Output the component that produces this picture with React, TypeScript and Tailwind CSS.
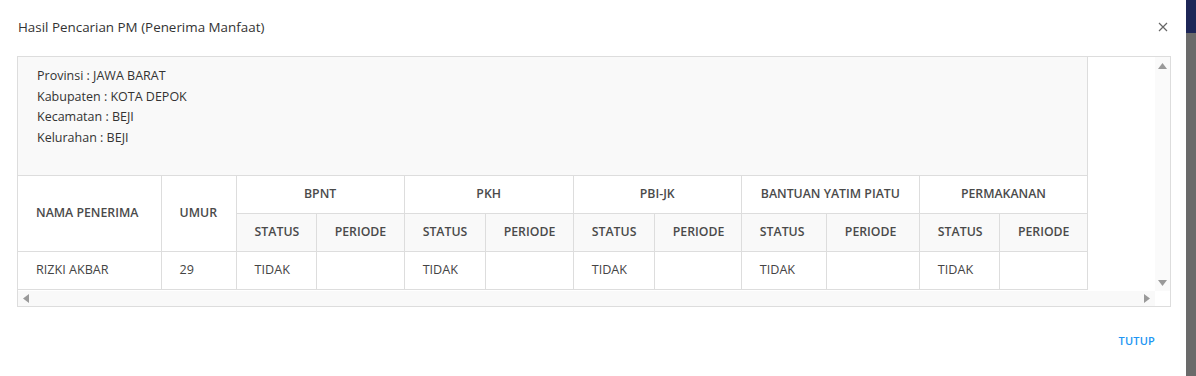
const programs = ['BPNT', 'PKH', 'PBI-JK', 'BANTUAN YATIM PIATU', 'PERMAKANAN'];

const colWidths = [143, 75, 80, 88, 81, 88, 81, 87, 85, 93, 80, 88];

const wilayah = [
  ['Provinsi', 'JAWA BARAT'],
  ['Kabupaten', 'KOTA DEPOK'],
  ['Kecamatan', 'BEJI'],
  ['Kelurahan', 'BEJI'],
];

const cell = 'border border-[#dddddd] h-[38px] px-[18px] align-middle whitespace-nowrap';
const head = `${cell} font-semibold text-[12.3px] text-[#4a4a4a]`;

function Arrow({ dir }: { dir: 'up' | 'down' | 'left' | 'right' }) {
  const points = {
    up: '0,6 4.5,0 9,6',
    down: '0,0 4.5,6 9,0',
    left: '6,0 0,4.5 6,9',
    right: '0,0 6,4.5 0,9',
  }[dir];
  const vertical = dir === 'up' || dir === 'down';
  return (
    <svg width={vertical ? 9 : 6} height={vertical ? 6 : 9} viewBox={vertical ? '0 0 9 6' : '0 0 6 9'}>
      <polygon points={points} fill="#9a9a9a" />
    </svg>
  );
}

export default function App() {
  return (
    <div className="flex h-[376px] w-[1196px] bg-white text-[#333333]" style={{ fontFamily: '"Open Sans", "Noto Sans", sans-serif' }}>
      <div className="flex w-[1186px] flex-col">
        {/* header */}
        <div className="flex h-[56px] items-center justify-between pl-[18px] pr-[18px]">
          <h2 className="text-[13.4px] leading-none text-[#333333]">Hasil Pencarian PM (Penerima Manfaat)</h2>
          <svg width="10" height="10" viewBox="0 0 10 10" className="mt-[-3px]">
            <path d="M1 1 L9 9 M9 1 L1 9" stroke="#666666" strokeWidth="1.2" />
          </svg>
        </div>

        {/* scroll box */}
        <div className="ml-[17px] flex h-[251px] w-[1154px] flex-col border border-[#dddddd]">
          <div className="flex min-h-0 flex-1">
            <div className="flex-1 overflow-hidden">
              <div className="w-[1070px]">
                <div className="h-[118px] border-r border-[#dddddd] bg-[#f9f9f9] pl-[19px] pt-[9px] text-[12.5px] leading-[20.5px]">
                  {wilayah.map(([k, v]) => (
                    <div key={k}>
                      {k} : {v}
                    </div>
                  ))}
                </div>
                <table className="table-fixed border-collapse text-left text-[12.6px] text-[#444444]" style={{ width: 1070 }}>
                  <colgroup>
                    {colWidths.map((w, i) => (
                      <col key={i} style={{ width: w }} />
                    ))}
                  </colgroup>
                  <thead>
                    <tr>
                      <th rowSpan={2} className={`${head} border-l-0`}>NAMA PENERIMA</th>
                      <th rowSpan={2} className={head}>UMUR</th>
                      {programs.map((p) => (
                        <th key={p} colSpan={2} className={`${head} text-center`}>{p}</th>
                      ))}
                    </tr>
                    <tr className="bg-[#f9f9f9]">
                      {programs.map((p) => [
                        <th key={`${p}-s`} className={head}>STATUS</th>,
                        <th key={`${p}-p`} className={head}>PERIODE</th>,
                      ])}
                    </tr>
                  </thead>
                  <tbody>
                    <tr>
                      <td className={`${cell} border-l-0`}>RIZKI AKBAR</td>
                      <td className={cell}>29</td>
                      {programs.map((p) => [
                        <td key={`${p}-s`} className={cell}>TIDAK</td>,
                        <td key={`${p}-p`} className={cell}></td>,
                      ])}
                    </tr>
                  </tbody>
                </table>
              </div>
            </div>
            {/* vertical scrollbar */}
            <div className="flex w-[15px] flex-col items-center justify-between bg-[#fafafa] pb-[5px] pt-[6px]">
              <Arrow dir="up" />
              <Arrow dir="down" />
            </div>
          </div>
          {/* horizontal scrollbar */}
          <div className="flex h-[15px]">
            <div className="flex flex-1 items-center justify-between bg-[#f9f9f9] pl-[5px] pr-[5px]">
              <Arrow dir="left" />
              <Arrow dir="right" />
            </div>
            <div className="w-[15px] bg-white" />
          </div>
        </div>

        {/* footer */}
        <div className="flex flex-1 items-center justify-end pr-[31px]">
          <button className="text-[11px] font-semibold tracking-[0.2px] text-[#2196f3]">TUTUP</button>
        </div>
      </div>

      {/* page behind the dialog */}
      <div className="flex flex-1 flex-col">
        <div className="h-[33px] bg-[#1d2657]" />
        <div className="flex-1 bg-[#6a6a6a]" />
      </div>
    </div>
  );
}
